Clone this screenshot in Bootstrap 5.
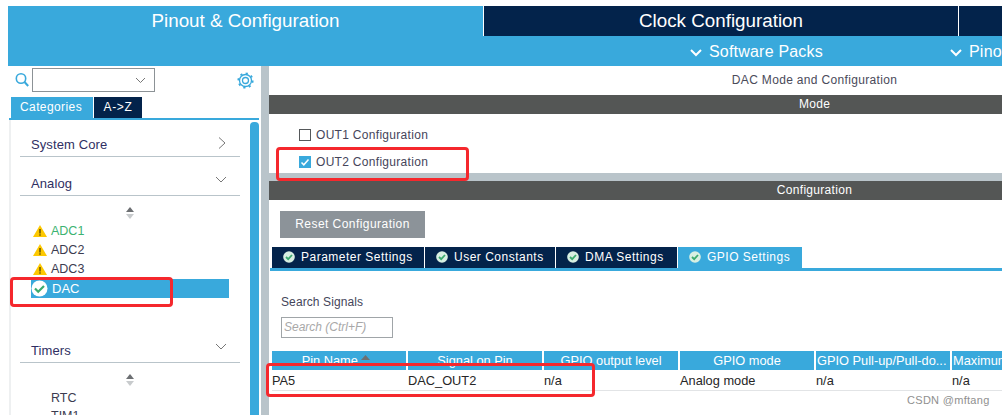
<!DOCTYPE html>
<html lang="en">
<head>
  <meta charset="UTF-8" />
  <title>DAC Mode and Configuration</title>
  <link href="https://cdn.jsdelivr.net/npm/bootstrap@5.3.3/dist/css/bootstrap.min.css" rel="stylesheet">
  <style>
    html, body { height: 415px; overflow: hidden; }
    body { font-family: "Liberation Sans", Arial, sans-serif; font-size: 12px; color: #3c3c50; background: #fff; position: relative; }
    .top-area { padding: 6px 0 0 8px; }
    .top-tabs { height: 30px; }
    .top-tab { height: 30px; font-size: 18.8px; color: #fff; background: #03234b; border-left: 1px solid #fff; line-height: 30px; text-align: center; }
    .top-tab.active-tab { width: 475px; background: #39a9dc; border-left: 0; }
    .top-tab.mid-tab { width: 475px; }
    .top-tab.last-tab { flex: 1; }
    .sub-bar { height: 30px; background: #39a9dc; color: #fff; font-size: 16px; line-height: 31px; letter-spacing: .2px; position: relative; overflow: hidden; }
    .sub-item { position: absolute; top: 0; white-space: nowrap; }
    .sub-item svg { margin-right: 6px; vertical-align: -1px; }
    .work { height: 349px; }
    .side-col { width: 261px; flex: none; position: relative; }
    .divider-col { width: 8px; flex: none; background: #b9c4ca; }
    .main-col { flex: 1; min-width: 0; }
    .search-row { height: 31px; padding: 2px 7px 0 15px; }
    .combo-box { width: 123px; height: 24px; border: 1px solid #8c9296; margin-left: 3px; }
    .side-tabs { margin-left: 11px; height: 21px; }
    .side-tab { height: 21px; line-height: 20px; font-size: 12px; letter-spacing: .4px; color: #fff; }
    .tab-cat { width: 82px; background: #39a9dc; padding-left: 9px; }
    .tab-az { width: 48px; margin-left: 1px; background: #03234b; text-align: center; letter-spacing: .7px; }
    .side-rule { height: 2px; background: #39a9dc; margin: 0 2px 0 9px; }
    .side-panel { height: 295px; margin-left: 9px; border-left: 2px solid #eef0f1; position: relative; overflow: hidden; }
    .side-scroll { position: absolute; left: 239px; top: 2px; width: 9px; height: 320px; background: #39a9dc; border-radius: 4px 4px 0 0; }
    .group-head { position: absolute; left: 9px; width: 220px; height: 24px; border-bottom: 1px solid #b9c4ca; padding: 2px 0 0 11px; font-size: 13px; color: #2f2f63; letter-spacing: .1px; }
    .group-head svg { position: absolute; right: 13px; top: 3px; }
    .peri-item { position: absolute; left: 40px; font-size: 12.5px; line-height: 19px; white-space: nowrap; }
    .peri-item.ok-green { color: #3cb371; }
    .peri-item svg { position: absolute; left: -18px; top: 3px; }
    .peri-active { position: absolute; left: 20px; width: 198px; height: 19px; background: #39a9dc; color: #fff; font-size: 13px; line-height: 19px; padding-left: 21px; }
    .peri-active svg { position: absolute; left: 0; top: 1px; }
    .spin-arrows { position: absolute; left: 114px; }
    .page-title { height: 29px; line-height: 29px; padding-left: 358px; text-align: center; color: #4a4a5a; letter-spacing: .33px; white-space: nowrap; }
    .section-bar { height: 19px; line-height: 19px; padding-left: 358px; background: #545655; color: #fff; text-align: center; letter-spacing: .3px; }
    .mode-panel { height: 59px; padding: 12px 0 0 30px; }
    .check-row { height: 27px; font-size: 12px; letter-spacing: .3px; color: #45455a; }
    .check-box { width: 12px; height: 12px; border: 1px solid #55585a; margin: 3px 5px 0 0; flex: none; }
    .check-box.on { background: #39a9dc; border-color: #39a9dc; }
    .gap-bar { height: 8px; background: #b9c4ca; }
    .reset-btn { width: 145px; height: 27px; margin: 11px 0 0 11px; background: #8c9399; color: #fff; line-height: 27px; text-align: center; letter-spacing: .45px; }
    .cfg-tabs { margin: 9px 0 0 3px; height: 21px; }
    .cfg-tab { height: 21px; background: #03234b; color: #fff; line-height: 21px; padding-left: 29px; position: relative; letter-spacing: .5px; border-right: 1px solid #fff; }
    .cfg-tab svg { position: absolute; left: 11px; top: 4px; }
    .cfg-tab.sel-tab { background: #39a9dc; border-right: 0; }
    .cfg-rule { height: 3px; background: #39a9dc; margin-left: 1px; }
    .search-label { margin: 23px 0 0 12px; height: 16px; line-height: 16px; color: #45455a; letter-spacing: .1px; }
    .search-box { width: 112px; height: 21px; margin: 7px 0 0 12px; border: 1px solid #a0a5a8; font-style: italic; color: #a8a8a8; line-height: 19px; padding-left: 2px; }
    .pin-table { margin: 13px 0 0 3px; font-size: 12.8px; }
    .pin-row { height: 19px; gap: 2px; }
    .pin-cell { width: 134px; flex: none; background: #39a9dc; color: #fff; text-align: center; line-height: 20px; white-space: nowrap; overflow: hidden; padding: 0 1px; }
    .pin-cell.sort-cell { padding-right: 7px; }
    .pin-body { height: 21px; gap: 2px; border-bottom: 1px solid #e2e4e6; }
    .pin-body .pin-val { width: 134px; flex: none; line-height: 22px; color: #262626; white-space: nowrap; }
    .red-mark { position: absolute; border: 3px solid #f5282d; border-radius: 4px; pointer-events: none; }
    .water-mark { position: absolute; left: 907px; top: 392px; font-size: 11px; color: #8f8f8f; letter-spacing: .3px; }
  </style>
</head>
<body>
  <!-- header -->
  <div class="top-area">
    <div class="top-tabs d-flex">
      <div class="top-tab active-tab">Pinout &amp; Configuration</div>
      <div class="top-tab mid-tab">Clock Configuration</div>
      <div class="top-tab last-tab"></div>
    </div>
    <div class="sub-bar">
      <div class="sub-item" style="left:681px"><svg width="14" height="10" viewBox="0 0 14 10"><path d="M2 2l5 5 5-5" fill="none" stroke="#fff" stroke-width="2"/></svg>Software Packs</div>
      <div class="sub-item" style="left:941px"><svg width="14" height="10" viewBox="0 0 14 10"><path d="M2 2l5 5 5-5" fill="none" stroke="#fff" stroke-width="2"/></svg>Pinout</div>
    </div>
  </div>

  <div class="work d-flex">
    <!-- left tree -->
    <div class="side-col">
      <div class="search-row d-flex">
        <svg width="14" height="16" viewBox="0 0 14 16" class="mt-1"><circle cx="6" cy="6.5" r="4.7" fill="none" stroke="#39a9dc" stroke-width="1.6"/><path d="M9.5 10l3.7 4" stroke="#39a9dc" stroke-width="2"/></svg>
        <div class="combo-box d-flex align-items-center justify-content-end pe-2">
          <svg width="11" height="7" viewBox="0 0 11 7"><path d="M1 1l4.5 4.5L10 1" fill="none" stroke="#777" stroke-width="1"/></svg>
        </div>
        <svg class="ms-auto mt-1" width="17" height="17" viewBox="0 0 17 17"><circle cx="8.5" cy="8.5" r="3" fill="none" stroke="#39a9dc" stroke-width="1.3"/><circle cx="8.5" cy="8.5" r="6" fill="none" stroke="#39a9dc" stroke-width="1.3"/><circle cx="8.5" cy="8.5" r="7.2" fill="none" stroke="#39a9dc" stroke-width="1.8" stroke-dasharray="2.2 3.45"/></svg>
      </div>
      <div class="side-tabs d-flex">
        <div class="side-tab tab-cat">Categories</div>
        <div class="side-tab tab-az">A-&gt;Z</div>
      </div>
      <div class="side-rule"></div>
      <div class="side-panel">
        <div class="side-scroll"></div>
        <div class="group-head" style="top:13px">System Core
          <svg width="10" height="14" viewBox="0 0 10 14"><path d="M2 1.5L8 7l-6 5.5" fill="none" stroke="#777" stroke-width="1"/></svg>
        </div>
        <div class="group-head" style="top:52px">Analog
          <svg width="12" height="10" viewBox="0 0 12 10"><path d="M1 2l5 5 5-5" fill="none" stroke="#777" stroke-width="1"/></svg>
        </div>
        <svg class="spin-arrows" style="top:87px" width="10" height="12" viewBox="0 0 10 12"><path d="M5 0l4 5H1z" fill="#6c6f72"/><path d="M5 12l4-5H1z" fill="#c8cbcd"/></svg>
        <div class="peri-item ok-green" style="top:102px"><svg width="14" height="12" viewBox="0 0 14 12"><path d="M7 0l7 12H0z" fill="#fdc800"/><rect x="6.3" y="4" width="1.4" height="4.5" fill="#5a4a00"/><rect x="6.3" y="9.3" width="1.4" height="1.4" fill="#5a4a00"/></svg>ADC1</div>
        <div class="peri-item" style="top:121px"><svg width="14" height="12" viewBox="0 0 14 12"><path d="M7 0l7 12H0z" fill="#fdc800"/><rect x="6.3" y="4" width="1.4" height="4.5" fill="#5a4a00"/><rect x="6.3" y="9.3" width="1.4" height="1.4" fill="#5a4a00"/></svg>ADC2</div>
        <div class="peri-item" style="top:140px"><svg width="14" height="12" viewBox="0 0 14 12"><path d="M7 0l7 12H0z" fill="#fdc800"/><rect x="6.3" y="4" width="1.4" height="4.5" fill="#5a4a00"/><rect x="6.3" y="9.3" width="1.4" height="1.4" fill="#5a4a00"/></svg>ADC3</div>
        <div class="peri-active" style="top:159px"><svg width="17" height="17" viewBox="0 0 17 17"><circle cx="8.5" cy="8.5" r="8" fill="#fff"/><path d="M4 8.5l3.2 3.2L13 6" fill="none" stroke="#3cab6e" stroke-width="2.2"/></svg>DAC</div>
        <div class="group-head" style="top:219px">Timers
          <svg width="12" height="10" viewBox="0 0 12 10"><path d="M1 2l5 5 5-5" fill="none" stroke="#777" stroke-width="1"/></svg>
        </div>
        <svg class="spin-arrows" style="top:254px" width="10" height="12" viewBox="0 0 10 12"><path d="M5 0l4 5H1z" fill="#6c6f72"/><path d="M5 12l4-5H1z" fill="#c8cbcd"/></svg>
        <div class="peri-item" style="top:269px">RTC</div>
        <div class="peri-item" style="top:287px">TIM1</div>
      </div>
    </div>
    <div class="divider-col"></div>

    <!-- right config -->
    <div class="main-col">
      <div class="page-title">DAC Mode and Configuration</div>
      <div class="section-bar">Mode</div>
      <div class="mode-panel">
        <div class="check-row d-flex align-items-start"><span class="check-box"></span>OUT1 Configuration</div>
        <div class="check-row d-flex align-items-start"><span class="check-box on d-flex"><svg width="10" height="10" viewBox="0 0 10 10"><path d="M1.5 5.5l2.3 2.3L8.5 2.5" fill="none" stroke="#fff" stroke-width="1.5"/></svg></span>OUT2 Configuration</div>
      </div>
      <div class="gap-bar"></div>
      <div class="section-bar">Configuration</div>
      <div class="reset-btn">Reset Configuration</div>
      <div class="cfg-tabs d-flex">
        <div class="cfg-tab" style="width:153px"><svg width="12" height="12" viewBox="0 0 12 12"><circle cx="6" cy="6" r="5.8" fill="#d8efe2"/><path d="M3 6l2.2 2.2L9 4" fill="none" stroke="#3cab6e" stroke-width="1.8"/></svg>Parameter Settings</div>
        <div class="cfg-tab" style="width:131px"><svg width="12" height="12" viewBox="0 0 12 12"><circle cx="6" cy="6" r="5.8" fill="#d8efe2"/><path d="M3 6l2.2 2.2L9 4" fill="none" stroke="#3cab6e" stroke-width="1.8"/></svg>User Constants</div>
        <div class="cfg-tab" style="width:122px"><svg width="12" height="12" viewBox="0 0 12 12"><circle cx="6" cy="6" r="5.8" fill="#d8efe2"/><path d="M3 6l2.2 2.2L9 4" fill="none" stroke="#3cab6e" stroke-width="1.8"/></svg>DMA Settings</div>
        <div class="cfg-tab sel-tab" style="width:124px"><svg width="12" height="12" viewBox="0 0 12 12"><circle cx="6" cy="6" r="5.8" fill="#d8efe2"/><path d="M3 6l2.2 2.2L9 4" fill="none" stroke="#3cab6e" stroke-width="1.8"/></svg>GPIO Settings</div>
      </div>
      <div class="cfg-rule"></div>
      <div class="search-label">Search Signals</div>
      <div class="search-box">Search (Ctrl+F)</div>
      <div class="pin-table">
        <div class="pin-row d-flex">
          <div class="pin-cell sort-cell">Pin Name <svg width="9" height="5" viewBox="0 0 9 5" class="align-top mt-1"><path d="M4.5 0l4.5 5H0z" fill="#6c6f72"/></svg></div>
          <div class="pin-cell">Signal on Pin</div>
          <div class="pin-cell">GPIO output level</div>
          <div class="pin-cell">GPIO mode</div>
          <div class="pin-cell text-start">GPIO Pull-up/Pull-do...</div>
          <div class="pin-cell text-start">Maximum output speed</div>
        </div>
        <div class="pin-body d-flex">
          <div class="pin-val">PA5</div>
          <div class="pin-val">DAC_OUT2</div>
          <div class="pin-val">n/a</div>
          <div class="pin-val">Analog mode</div>
          <div class="pin-val">n/a</div>
          <div class="pin-val">n/a</div>
        </div>
      </div>
    </div>
  </div>

  <!-- annotations on top of the screenshot -->
  <div class="red-mark" style="left:10px;top:277px;width:163px;height:30px"></div>
  <div class="red-mark" style="left:276px;top:147px;width:193px;height:34px"></div>
  <div class="red-mark" style="left:266px;top:363px;width:329px;height:34px"></div>
  <div class="water-mark">CSDN @mftang</div>

  <script src="https://cdn.jsdelivr.net/npm/bootstrap@5.3.3/dist/js/bootstrap.bundle.min.js"></script>
</body>
</html>
